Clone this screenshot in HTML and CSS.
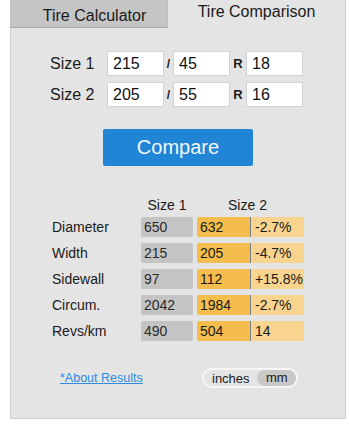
FILE: index.html
```html
<!DOCTYPE html>
<html lang="en">

<head>
    <meta charset="UTF-8">
    <meta name="viewport" content="width=device-width, initial-scale=1.0">
    <title>Tire Comparison</title>
    <link rel="stylesheet" href="styles.css">
</head>

<body>

    <div class="widget">
        <div class="tabs">
            <div class="tab">Tire Calculator</div>
            <div class="tab active">Tire Comparison</div>
        </div>

        <div class="sizes">
            <div class="size-row">
                <span class="size-label">Size 1</span>
                <input class="size-input" type="text" value="215">
                <span class="sep slash">/</span>
                <input class="size-input" type="text" value="45">
                <span class="sep r">R</span>
                <input class="size-input" type="text" value="18">
            </div>
            <div class="size-row">
                <span class="size-label">Size 2</span>
                <input class="size-input" type="text" value="205">
                <span class="sep slash">/</span>
                <input class="size-input" type="text" value="55">
                <span class="sep r">R</span>
                <input class="size-input" type="text" value="16">
            </div>
        </div>

        <button class="compare">Compare</button>

        <div class="results">
            <div class="head">
                <span class="head-1">Size 1</span>
                <span class="head-2">Size 2</span>
            </div>
            <div class="row">
                <span class="label">Diameter</span>
                <span class="v1">650</span>
                <span class="v2">632</span>
                <span class="v3">-2.7%</span>
            </div>
            <div class="row">
                <span class="label">Width</span>
                <span class="v1">215</span>
                <span class="v2">205</span>
                <span class="v3">-4.7%</span>
            </div>
            <div class="row">
                <span class="label">Sidewall</span>
                <span class="v1">97</span>
                <span class="v2">112</span>
                <span class="v3">+15.8%</span>
            </div>
            <div class="row">
                <span class="label">Circum.</span>
                <span class="v1">2042</span>
                <span class="v2">1984</span>
                <span class="v3">-2.7%</span>
            </div>
            <div class="row">
                <span class="label">Revs/km</span>
                <span class="v1">490</span>
                <span class="v2">504</span>
                <span class="v3">14</span>
            </div>
        </div>

        <div class="footer">
            <a class="about" href="#">*About Results</a>
            <div class="units">
                <span class="unit">inches</span>
                <span class="unit on">mm</span>
            </div>
        </div>
    </div>

</body>

</html>
```

FILE: styles.css
```css
body {
    margin: 0;
    background-color: #fff;
    font-family: "Liberation Sans", Arial, sans-serif;
    color: #1a1a1a;
}

.widget {
    margin-left: 10px;
    width: 336px;
    height: 419px;
    box-sizing: border-box;
    background-color: #e4e4e4;
    border: 1px solid #cfcfcf;
    border-top: none;
}

/* tabs */

.tabs {
    display: flex;
    height: 28px;
    margin-left: -1px;
}

.tab {
    width: 158px;
    box-sizing: border-box;
    background-color: #c5c5c5;
    border-bottom: 1px solid #a9a9a9;
    border-right: 1px solid #bdbdbd;
    font-size: 16px;
    line-height: 16px;
    padding-top: 8px;
    padding-left: 12px;
    text-align: center;
}

.tab.active {
    flex: 1;
    background-color: #e4e4e4;
    border: none;
    padding-top: 4px;
    padding-left: 0;
}

/* size inputs */

.sizes {
    margin-top: 23px;
    padding-left: 39px;
    display: flex;
    flex-direction: column;
    gap: 6px;
}

.size-row {
    display: flex;
    align-items: center;
    height: 25px;
}

.size-label {
    width: 57px;
    font-size: 16px;
}

.size-input {
    width: 57px;
    height: 25px;
    box-sizing: border-box;
    margin: 0;
    border: 1px solid #d3d3d3;
    background-color: #fff;
    padding: 0 5px;
    font-family: "Liberation Sans", Arial, sans-serif;
    font-size: 16px;
    color: #111;
    outline: none;
}

.sep {
    text-align: center;
    font-weight: bold;
}

.slash {
    width: 9px;
    font-size: 12px;
}

.r {
    width: 16px;
    font-size: 13px;
}

/* button */

.compare {
    display: block;
    margin: 22px auto 0;
    width: 150px;
    height: 37px;
    border: none;
    border-radius: 2px;
    background-color: #2185d6;
    color: #f4f8fc;
    font-family: "Liberation Sans", Arial, sans-serif;
    font-size: 20px;
}

/* results table */

.results {
    margin-top: 31px;
    padding-left: 41px;
}

.head {
    display: flex;
    font-size: 14px;
    line-height: 17px;
}

.head-1 {
    margin-left: 89px;
    width: 52px;
    text-align: center;
}

.head-2 {
    margin-left: 4px;
    width: 101px;
    text-align: center;
}

.row {
    display: flex;
    height: 20px;
    margin-top: 6px;
    font-size: 14px;
    line-height: 20px;
}

.head + .row {
    margin-top: 3px;
}

.label {
    width: 89px;
}

.v1,
.v2,
.v3 {
    box-sizing: border-box;
    padding-left: 3px;
    white-space: nowrap;
    overflow: hidden;
}

.v1 {
    width: 52px;
    background-color: #c4c4c4;
    border-radius: 2px;
    color: #2a2a2a;
}

.v2 {
    width: 54px;
    margin-left: 4px;
    background-color: #f4bd4d;
    border-right: 1px solid #7d7f8f;
    border-radius: 2px 0 0 2px;
}

.v3 {
    width: 53px;
    padding-left: 4px;
    background-color: #f8d48e;
}

/* footer */

.footer {
    display: flex;
    align-items: center;
    margin-top: 27px;
    padding-left: 49px;
    height: 20px;
}

.about {
    width: 142px;
    font-size: 12.5px;
    color: #2c8ce0;
}

.units {
    display: flex;
    align-items: center;
    width: 96px;
    height: 20px;
    box-sizing: border-box;
    border: 2px solid #f6f6f6;
    border-radius: 10px;
    font-size: 13px;
}

.unit {
    padding: 0 0 0 8px;
    width: 46px;
}

.unit.on {
    width: 39px;
    padding: 0;
    height: 16px;
    line-height: 16px;
    text-align: center;
    background-color: #c8c8c8;
    border-radius: 8px;
}
```
